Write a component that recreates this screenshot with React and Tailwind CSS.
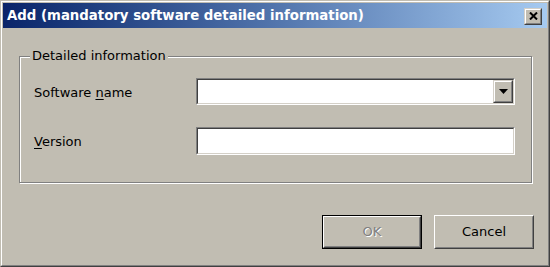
export default function App() {
  return (
    <div className="w-[550px] h-[267px] bg-[#c1bdb2] border border-[#c1bdb2] border-r-[#404040] border-b-[#404040] font-['DejaVu_Sans',sans-serif] text-[13px] text-black">
      <div className="h-full border border-white border-r-[#808080] border-b-[#808080] p-px flex flex-col">
        {/* title bar */}
        <div className="h-[25px] flex items-center pl-[4px] pr-[5px] bg-gradient-to-r from-[#0a246a] to-[#a6caf0]">
          <span className="text-white font-bold text-[13.3px]">Add (mandatory software detailed information)</span>
          <div className="ml-auto mt-[1px] w-[18px] h-[17px] border border-[#d4d0c8] border-r-[#404040] border-b-[#404040] bg-[#c1bdb2]">
            <div className="w-full h-full border border-white border-r-[#808080] border-b-[#808080] flex items-center justify-center">
              <svg width="9" height="8" viewBox="0 0 9 8">
                <path d="M1 0.5 L8 7.5 M8 0.5 L1 7.5" stroke="black" strokeWidth="2" />
              </svg>
            </div>
          </div>
        </div>

        {/* group box */}
        <div className="relative mt-[28px] ml-[16px] w-[513px] h-[127px] border border-[#808080] shadow-[inset_1px_1px_0_#ffffff,1px_1px_0_#ffffff]">
          <span className="absolute left-[10px] -top-[9px] px-[2px] bg-[#c1bdb2] leading-[16px]">Detailed information</span>
          <div className="pt-[21px] pl-[14px] grid grid-cols-[162px_319px] gap-y-[22px] items-center">
            <span className="translate-y-[1px]">Software <span className="underline underline-offset-2">n</span>ame</span>
            <div className="h-[27px] border border-[#808080] border-r-white border-b-white">
              <div className="h-full border border-[#404040] border-r-[#d4d0c8] border-b-[#d4d0c8] bg-white flex justify-end">
                <div className="w-[20px] h-full border border-[#d4d0c8] border-r-[#404040] border-b-[#404040] bg-[#c1bdb2]">
                  <div className="w-full h-full border border-white border-r-[#808080] border-b-[#808080] flex items-center justify-center">
                    <svg width="9" height="5" viewBox="0 0 9 5">
                      <path d="M0 0 H9 L4.5 5 Z" fill="black" />
                    </svg>
                  </div>
                </div>
              </div>
            </div>
            <span className="translate-y-[1px]"><span className="underline underline-offset-2">V</span>ersion</span>
            <div className="h-[28px] border border-[#808080] border-r-white border-b-white">
              <div className="h-full border border-[#404040] border-r-[#d4d0c8] border-b-[#d4d0c8] bg-white"></div>
            </div>
          </div>
        </div>

        {/* buttons */}
        <div className="mt-[32px] flex justify-end gap-[12px] pr-[13px]">
          <div className="w-[100px] h-[34px] border border-black">
            <div className="w-full h-full border border-white border-r-[#404040] border-b-[#404040]">
              <div className="w-full h-full border border-[#c1bdb2] border-r-[#808080] border-b-[#808080] flex items-center justify-center text-[#808080] [text-shadow:1px_1px_0_#ffffff]">
                OK
              </div>
            </div>
          </div>
          <div className="w-[100px] h-[34px] border border-white border-r-[#404040] border-b-[#404040]">
            <div className="w-full h-full border border-[#c1bdb2] border-r-[#808080] border-b-[#808080] flex items-center justify-center">
              Cancel
            </div>
          </div>
        </div>
      </div>
    </div>
  );
}
